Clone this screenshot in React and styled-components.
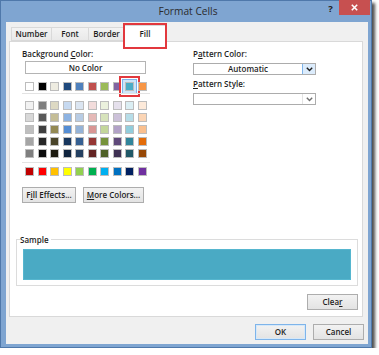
import styled, { createGlobalStyle } from 'styled-components';

const GlobalStyle = createGlobalStyle`
  html, body { margin: 0; padding: 0; background: #ffffff; }
  body { font-family: "Open Sans", "DejaVu Sans", sans-serif; color: #1e1e1e; }
  * { box-sizing: border-box; }
`;

const themeRow = ['#ffffff', '#000000', '#eeece1', '#1f497d', '#4f81bd', '#c0504d', '#9bbb59', '#8064a2', '#4bacc6', '#f79646'];
const shadeRows = [
  ['#f2f2f2', '#7f7f7f', '#ddd9c3', '#c6d9f0', '#dbe5f1', '#f2dcdb', '#ebf1dd', '#e5e0ec', '#dbeef3', '#fdeada'],
  ['#d8d8d8', '#595959', '#c4bd97', '#8db3e2', '#b8cce4', '#e5b9b7', '#d7e3bc', '#ccc1d9', '#b7dde8', '#fbd5b5'],
  ['#bfbfbf', '#3f3f3f', '#938953', '#548dd4', '#95b3d7', '#d99694', '#c3d69b', '#b2a2c7', '#92cddc', '#fac08f'],
  ['#a5a5a5', '#262626', '#494429', '#17365d', '#366092', '#953734', '#76923c', '#5f497a', '#31859b', '#e36c09'],
  ['#7f7f7f', '#0c0c0c', '#1d1b10', '#0f243e', '#244061', '#632423', '#4f6128', '#3f3153', '#205867', '#974806'],
];
const standardRow = ['#c00000', '#ff0000', '#ffc000', '#ffff00', '#92d050', '#00b050', '#00b0f0', '#0070c0', '#002060', '#7030a0'];

const tabs = [
  { name: 'Number', width: 41 },
  { name: 'Font', width: 38 },
  { name: 'Border', width: 37 },
  { name: 'Fill', width: 42, active: true },
];

const Window = styled.div`
  width: 372px;
  height: 348px;
  background: #7fa5d1;
  border: 1px solid #4f78aa;
  box-shadow: 3px 3px 3px rgba(20, 20, 20, 0.75);
  display: flex;
  flex-direction: column;
  padding: 0 3px 3px 5px;
`;

const TitleBar = styled.div`
  height: 21px;
  display: flex;
  align-items: flex-start;
  flex: none;
`;

const TitleSpacer = styled.div`
  width: 48px;
  flex: none;
`;

const Title = styled.div`
  flex: 1;
  text-align: center;
  font-size: 10.2px;
  line-height: 21px;
  color: #2b2b2b;
`;

const Controls = styled.div`
  width: 48px;
  flex: none;
  display: flex;
  align-items: flex-start;
  margin: -1px -2px 0 0;
`;

const HelpButton = styled.div`
  width: 17px;
  height: 15px;
  font-size: 9.5px;
  font-weight: 700;
  line-height: 17px;
  text-align: center;
  color: #222;
`;

const CloseButton = styled.div`
  width: 31px;
  height: 15px;
  background: #c75050;
  display: flex;
  align-items: center;
  justify-content: center;
`;

const Client = styled.div`
  flex: 1;
  background: #f0f0f0;
  display: flex;
  flex-direction: column;
  padding: 5px 4px 4px 3px;
`;

const TabRow = styled.div`
  height: 14px;
  display: flex;
  align-items: flex-end;
  padding-left: 2px;
  position: relative;
  z-index: 1;
  flex: none;
`;

const Tab = styled.div`
  position: relative;
  width: ${p => p.$width}px;
  height: ${p => (p.$active ? 17 : 14)}px;
  margin-right: -1px;
  margin-bottom: ${p => (p.$active ? -1 : 0)}px;
  background: ${p => (p.$active ? '#ffffff' : 'linear-gradient(#f3f3f3, #e9e9e9)')};
  border: 1px solid #d9d9d9;
  border-bottom: ${p => (p.$active ? 'none' : '1px solid #d9d9d9')};
  font-size: 8px;
  font-weight: 600;
  line-height: ${p => (p.$active ? 15 : 12)}px;
  text-align: center;
  color: #1e1e1e;
  white-space: nowrap;
  z-index: ${p => (p.$active ? 2 : 0)};

  ${p => p.$active && `
    &::after {
      content: '';
      position: absolute;
      left: -2px;
      right: -2px;
      top: -3px;
      bottom: -7px;
      border: 2px solid #e2383d;
    }
  `}
`;

const Panel = styled.div`
  flex: 1;
  background: #ffffff;
  border: 1px solid #d9d9d9;
  margin-right: 1px;
  display: flex;
  flex-direction: column;
  padding: 6px 4px 6px 6px;
`;

const TopSection = styled.div`
  display: grid;
  grid-template-columns: 171px 1fr;
  padding-left: 6px;
`;

const Column = styled.div`
  display: flex;
  flex-direction: column;
  align-items: flex-start;
`;

const Label = styled.div`
  font-size: 8px;
  font-weight: 600;
  line-height: 11px;
  margin-top: ${p => p.$top || 0}px;
  color: #1e1e1e;
  white-space: nowrap;
`;

const NoColorButton = styled.div`
  width: 121px;
  height: 13px;
  margin: 2px 0 0 3px;
  border: 1px solid #b4b4b4;
  background: #ffffff;
  font-size: 8px;
  font-weight: 600;
  line-height: 11px;
  text-align: center;
`;

const SwatchRow = styled.div`
  display: flex;
  gap: 3.5px;
  margin: ${p => p.$top || 0}px 0 0 3px;
`;

const SwatchGrid = styled.div`
  display: grid;
  grid-template-columns: repeat(10, 9px);
  grid-auto-rows: 9px;
  column-gap: 3.5px;
  row-gap: 3px;
  margin: 7px 0 0 3px;
`;

const Swatch = styled.div`
  width: 9px;
  height: 9px;
  background: ${p => p.$color};
  border: 1px solid #bdbdbd;
  ${p => p.$selected && `
    box-shadow: 0 0 0 2px #cde5f9, 0 0 0 3px #7eb4ea, 0 0 0 4px #ffffff, 0 0 0 6px #e2383d;
  `}
`;

const Separator = styled.div`
  width: 128px;
  height: 1px;
  background: #e3e3e3;
  margin-top: ${p => p.$top}px;
`;

const ButtonRow = styled.div`
  display: flex;
  gap: 7px;
  margin-top: 11px;
`;

const Button = styled.div`
  width: ${p => p.$width}px;
  height: 16px;
  border: 1px solid ${p => (p.$default ? '#7eb4ea' : '#adadad')};
  background: linear-gradient(#f2f2f2, #e3e3e3);
  font-size: 8px;
  font-weight: 600;
  line-height: 14px;
  text-align: center;
  color: #1e1e1e;
  white-space: nowrap;
  box-shadow: ${p => (p.$default ? 'inset 0 0 0 1px #d6e8f8' : 'none')};
`;

const Select = styled.div`
  width: 123px;
  height: 12px;
  margin-top: ${p => p.$top}px;
  border: 1px solid #acacac;
  background: #ffffff;
  display: flex;
`;

const SelectValue = styled.div`
  flex: 1;
  font-size: 8px;
  font-weight: 600;
  line-height: 10px;
  text-align: center;
`;

const SelectArrow = styled.div`
  width: 13px;
  flex: none;
  display: flex;
  align-items: center;
  justify-content: center;
  background: ${p => (p.$hot ? '#dcecfc' : '#ffffff')};
  border-left: 1px solid ${p => (p.$hot ? '#7eb4ea' : '#e3e3e3')};
`;

const BottomSection = styled.div`
  margin-top: auto;
  display: flex;
  flex-direction: column;
  align-items: flex-end;
`;

const Group = styled.div`
  align-self: stretch;
  border: 1px solid #dcdcdc;
  padding: 0 6px 5px 6px;
  display: flex;
  flex-direction: column;
  align-items: flex-start;
`;

const GroupLabel = styled.div`
  margin: -6px 0 0 -3px;
  padding-right: 2px;
  background: #ffffff;
  font-size: 8px;
  font-weight: 600;
  line-height: 11px;
`;

const SampleFill = styled.div`
  align-self: stretch;
  height: 31px;
  margin-top: 4px;
  background: #4aaac4;
  border: 1px solid #56b6cf;
`;

const ClearRow = styled.div`
  margin-top: 8px;
`;

const Footer = styled.div`
  display: flex;
  justify-content: flex-end;
  gap: 7px;
  padding-top: 7px;
  flex: none;
`;

function Chevron({ color }) {
  return (
    <svg width="7" height="5" viewBox="0 0 7 5">
      <path d="M0.8 0.8 L3.5 3.6 L6.2 0.8" fill="none" stroke={color} strokeWidth="1.4" />
    </svg>
  );
}

function App() {
  return (
    <>
      <GlobalStyle />
      <Window>
        <TitleBar>
          <TitleSpacer />
          <Title>Format Cells</Title>
          <Controls>
            <HelpButton>?</HelpButton>
            <CloseButton>
              <svg width="7" height="7" viewBox="0 0 7 7">
                <path d="M0.8 0.8 L6.2 6.2 M6.2 0.8 L0.8 6.2" stroke="#ffffff" strokeWidth="1.6" />
              </svg>
            </CloseButton>
          </Controls>
        </TitleBar>
        <Client>
          <TabRow>
            {tabs.map(t => (
              <Tab key={t.name} $width={t.width} $active={t.active}>{t.name}</Tab>
            ))}
          </TabRow>
          <Panel>
            <TopSection>
              <Column>
                <Label>Background <u>C</u>olor:</Label>
                <NoColorButton>No Color</NoColorButton>
                <SwatchRow $top={8}>
                  {themeRow.map((c, i) => (
                    <Swatch key={c} $color={c} $selected={i === 8} />
                  ))}
                </SwatchRow>
                <Separator $top={2} />
                <SwatchGrid>
                  {shadeRows.flat().map((c, i) => (
                    <Swatch key={i} $color={c} />
                  ))}
                </SwatchGrid>
                <Separator $top={4} />
                <SwatchRow $top={4}>
                  {standardRow.map(c => (
                    <Swatch key={c} $color={c} />
                  ))}
                </SwatchRow>
                <ButtonRow>
                  <Button $width={54}>F<u>i</u>ll Effects...</Button>
                  <Button $width={61}><u>M</u>ore Colors...</Button>
                </ButtonRow>
              </Column>
              <Column>
                <Label>P<u>a</u>ttern Color:</Label>
                <Select $top={4}>
                  <SelectValue>Automatic</SelectValue>
                  <SelectArrow $hot><Chevron color="#1e1e1e" /></SelectArrow>
                </Select>
                <Label $top={3}><u>P</u>attern Style:</Label>
                <Select $top={4}>
                  <SelectValue />
                  <SelectArrow><Chevron color="#707070" /></SelectArrow>
                </Select>
              </Column>
            </TopSection>
            <BottomSection>
              <Group>
                <GroupLabel>Sample</GroupLabel>
                <SampleFill />
              </Group>
              <ClearRow>
                <Button $width={51}>Clea<u>r</u></Button>
              </ClearRow>
            </BottomSection>
          </Panel>
          <Footer>
            <Button $width={51} $default>OK</Button>
            <Button $width={51}>Cancel</Button>
          </Footer>
        </Client>
      </Window>
    </>
  );
}

export default App;
